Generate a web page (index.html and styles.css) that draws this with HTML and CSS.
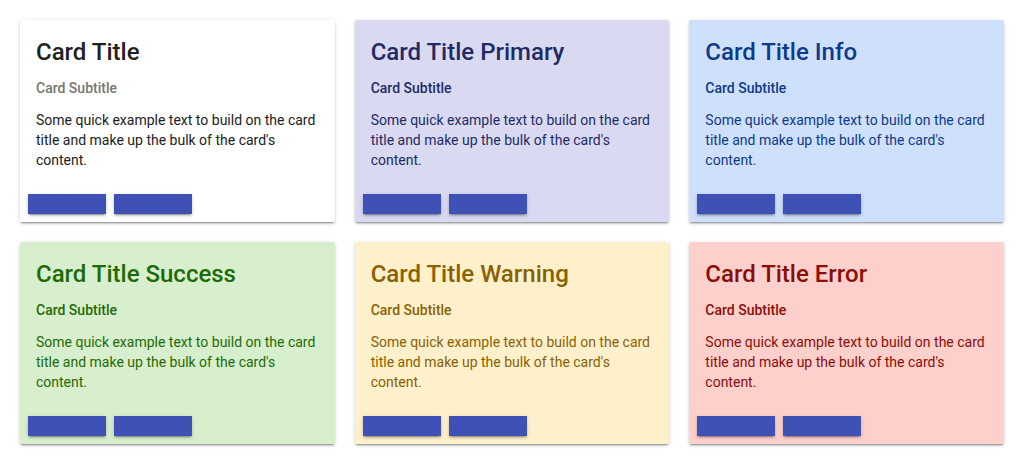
FILE: index.html
```html
<!DOCTYPE html>
<html lang="en">
<head>
<meta charset="utf-8">
<title>Cards</title>
<link rel="stylesheet" href="styles.css">
</head>
<body>
<div class="grid">
  <div class="card">
    <div class="card-body">
      <h2 class="card-title">Card Title</h2>
      <h3 class="card-subtitle">Card Subtitle</h3>
      <p class="card-text">Some quick example text to build on the card title and make up the bulk of the card's content.</p>
    </div>
    <div class="card-actions"><button class="btn">Action</button><button class="btn">Action</button></div>
  </div>
  <div class="card card-primary">
    <div class="card-body">
      <h2 class="card-title">Card Title Primary</h2>
      <h3 class="card-subtitle">Card Subtitle</h3>
      <p class="card-text">Some quick example text to build on the card title and make up the bulk of the card's content.</p>
    </div>
    <div class="card-actions"><button class="btn">Action</button><button class="btn">Action</button></div>
  </div>
  <div class="card card-info">
    <div class="card-body">
      <h2 class="card-title">Card Title Info</h2>
      <h3 class="card-subtitle">Card Subtitle</h3>
      <p class="card-text">Some quick example text to build on the card title and make up the bulk of the card's content.</p>
    </div>
    <div class="card-actions"><button class="btn">Action</button><button class="btn">Action</button></div>
  </div>
  <div class="card card-success">
    <div class="card-body">
      <h2 class="card-title">Card Title Success</h2>
      <h3 class="card-subtitle">Card Subtitle</h3>
      <p class="card-text">Some quick example text to build on the card title and make up the bulk of the card's content.</p>
    </div>
    <div class="card-actions"><button class="btn">Action</button><button class="btn">Action</button></div>
  </div>
  <div class="card card-warning">
    <div class="card-body">
      <h2 class="card-title">Card Title Warning</h2>
      <h3 class="card-subtitle">Card Subtitle</h3>
      <p class="card-text">Some quick example text to build on the card title and make up the bulk of the card's content.</p>
    </div>
    <div class="card-actions"><button class="btn">Action</button><button class="btn">Action</button></div>
  </div>
  <div class="card card-error">
    <div class="card-body">
      <h2 class="card-title">Card Title Error</h2>
      <h3 class="card-subtitle">Card Subtitle</h3>
      <p class="card-text">Some quick example text to build on the card title and make up the bulk of the card's content.</p>
    </div>
    <div class="card-actions"><button class="btn">Action</button><button class="btn">Action</button></div>
  </div>
</div>
</body>
</html>
```
FILE: styles.css
```css
html, body {
  margin: 0;
  padding: 0;
  background: #ffffff;
}
body {
  font-family: Roboto, "Liberation Sans", sans-serif;
  color: #212121;
}
.grid {
  display: grid;
  grid-template-columns: repeat(3, 1fr);
  gap: 20px;
  padding: 20px;
}
.card {
  background: #ffffff;
  border-radius: 2px;
  box-shadow: 0 3px 1px -2px rgba(0,0,0,0.2), 0 2px 2px 0 rgba(0,0,0,0.14), 0 1px 5px 0 rgba(0,0,0,0.12);
  display: flex;
  flex-direction: column;
  height: 202px;
  box-sizing: border-box;
}
.card-body {
  padding: 16px 16px 0 16px;
}
.card-title {
  margin: 0 0 10px 0;
  font-size: 24px;
  line-height: 32px;
  font-weight: 500;
}
.card-subtitle {
  margin: 0 0 12px 0;
  font-size: 14px;
  line-height: 20px;
  font-weight: 500;
  color: #757575;
}
.card-text {
  margin: 0;
  font-size: 14px;
  line-height: 20px;
  font-weight: 400;
}
.card-actions {
  margin-top: auto;
  display: flex;
  gap: 8px;
  padding: 8px;
}
.btn {
  width: 78px;
  height: 20px;
  padding: 0;
  border: none;
  border-radius: 0;
  background: #3f51b5;
  color: #3d4fb1;
  font-family: Roboto, sans-serif;
  font-size: 12px;
  font-weight: 500;
  box-shadow: 0 3px 1px -2px rgba(0,0,0,0.2), 0 2px 2px 0 rgba(0,0,0,0.14), 0 1px 5px 0 rgba(0,0,0,0.12);
}
.card-primary { background: #d9daf1; }
.card-primary .card-title,
.card-primary .card-subtitle,
.card-primary .card-text { color: #1f2a66; }
.card-info { background: #cfe0fc; }
.card-info .card-title,
.card-info .card-subtitle,
.card-info .card-text { color: #0d3a8a; }
.card-success { background: #d7efcc; }
.card-success .card-title,
.card-success .card-subtitle,
.card-success .card-text { color: #1f6a06; }
.card-warning { background: #fff0cc; }
.card-warning .card-title,
.card-warning .card-subtitle,
.card-warning .card-text { color: #8a6100; }
.card-error { background: #fdd0cc; }
.card-error .card-title,
.card-error .card-subtitle,
.card-error .card-text { color: #8b0e06; }
```
